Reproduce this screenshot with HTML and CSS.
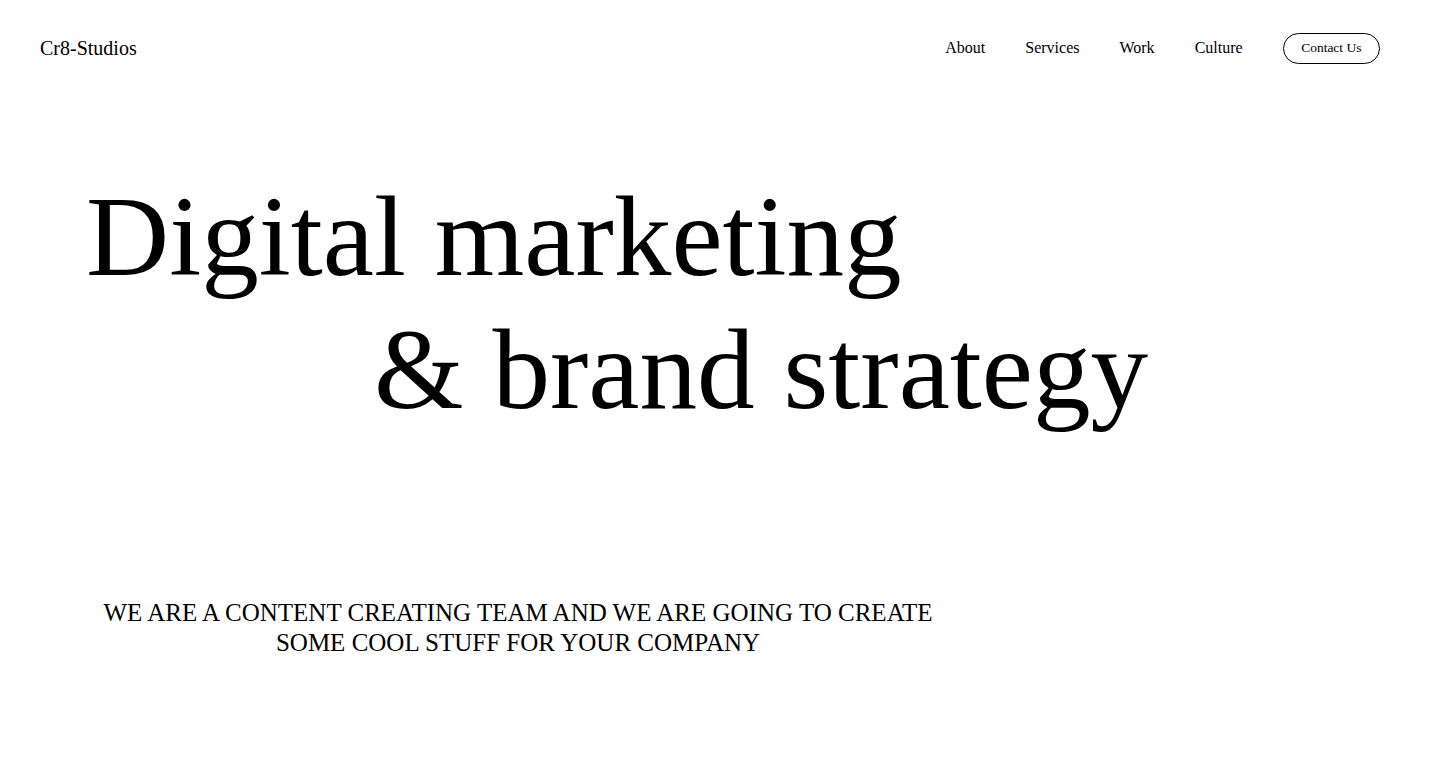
FILE: index.html
```html
<!DOCTYPE html>
<html lang="en">
<head>
<meta charset="utf-8">
<title>Cr8-Studios</title>
<link rel="stylesheet" href="styles.css">
</head>
<body>
<header class="site-header">
  <a class="logo" href="#">Cr8-Studios</a>
  <nav class="nav">
    <a class="nav-link" href="#">About</a>
    <a class="nav-link" href="#">Services</a>
    <a class="nav-link" href="#">Work</a>
    <a class="nav-link" href="#">Culture</a>
    <a class="contact-btn" href="#">Contact Us</a>
  </nav>
</header>
<main class="hero">
  <h1 class="hero-title">
    <span class="line line-one">Digital marketing</span>
    <span class="line line-two">&amp; brand strategy</span>
  </h1>
  <p class="hero-sub">WE ARE A CONTENT CREATING TEAM AND WE ARE GOING TO CREATE SOME COOL STUFF FOR YOUR COMPANY</p>
</main>
</body>
</html>
```

FILE: styles.css
```css
* { box-sizing: border-box; }
html, body { margin: 0; padding: 0; background: #fff; }
body {
  font-family: "Liberation Serif", "Times New Roman", serif;
  color: #000;
}
a { color: inherit; text-decoration: none; }

.site-header {
  display: flex;
  align-items: center;
  justify-content: space-between;
  height: 96px;
  padding: 0 60px 0 40px;
}
.logo {
  font-size: 20px;
  line-height: 1;
}
.nav {
  display: flex;
  align-items: center;
  gap: 40px;
}
.nav-link {
  font-size: 16px;
  line-height: 1;
}
.contact-btn {
  display: flex;
  align-items: center;
  height: 31px;
  padding: 0 17.5px;
  border: 1px solid #000;
  border-radius: 999px;
  font-size: 13.5px;
  line-height: 1;
}

.hero {
  padding: 0 0 0 86px;
}
.hero-title {
  margin: 74px 0 0;
  font-weight: 400;
  font-size: 115.2px;
  line-height: normal;
}
.line { display: block; white-space: nowrap; }
.line-two { padding-left: 288px; }

.hero-sub {
  width: 864px;
  margin: 162px 0 0;
  text-align: center;
  font-size: 25px;
  line-height: 1.2;
}
```
